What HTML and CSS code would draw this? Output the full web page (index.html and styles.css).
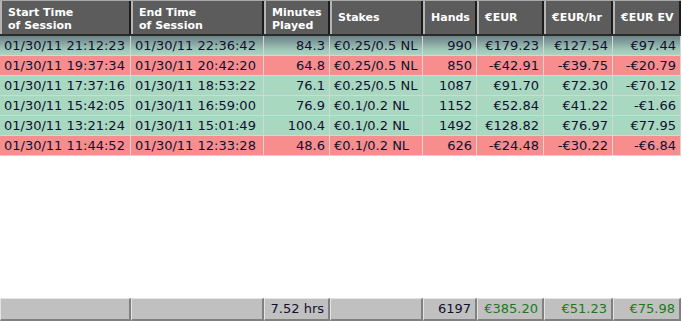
FILE: index.html
```html
<!DOCTYPE html>
<html>
<head>
<meta charset="utf-8">
<link rel="stylesheet" href="styles.css">
</head>
<body>
<div class="grid">
  <div class="row head">
    <div class="h">Start Time<br>of Session</div>
    <div class="h">End Time<br>of Session</div>
    <div class="h">Minutes<br>Played</div>
    <div class="h mid">Stakes</div>
    <div class="h mid">Hands</div>
    <div class="h mid">€EUR</div>
    <div class="h mid">€EUR/hr</div>
    <div class="h mid">€EUR EV</div>
  </div>
  <div class="row sel">
    <div class="c">01/30/11 21:12:23</div><div class="c">01/30/11 22:36:42</div><div class="c r">84.3</div><div class="c">€0.25/0.5 NL</div><div class="c r">990</div><div class="c r">€179.23</div><div class="c r">€127.54</div><div class="c r">€97.44</div>
  </div>
  <div class="row neg">
    <div class="c">01/30/11 19:37:34</div><div class="c">01/30/11 20:42:20</div><div class="c r">64.8</div><div class="c">€0.25/0.5 NL</div><div class="c r">850</div><div class="c r">-€42.91</div><div class="c r">-€39.75</div><div class="c r">-€20.79</div>
  </div>
  <div class="row pos">
    <div class="c">01/30/11 17:37:16</div><div class="c">01/30/11 18:53:22</div><div class="c r">76.1</div><div class="c">€0.25/0.5 NL</div><div class="c r">1087</div><div class="c r">€91.70</div><div class="c r">€72.30</div><div class="c r">-€70.12</div>
  </div>
  <div class="row pos">
    <div class="c">01/30/11 15:42:05</div><div class="c">01/30/11 16:59:00</div><div class="c r">76.9</div><div class="c">€0.1/0.2 NL</div><div class="c r">1152</div><div class="c r">€52.84</div><div class="c r">€41.22</div><div class="c r">-€1.66</div>
  </div>
  <div class="row pos">
    <div class="c">01/30/11 13:21:24</div><div class="c">01/30/11 15:01:49</div><div class="c r">100.4</div><div class="c">€0.1/0.2 NL</div><div class="c r">1492</div><div class="c r">€128.82</div><div class="c r">€76.97</div><div class="c r">€77.95</div>
  </div>
  <div class="row neg">
    <div class="c">01/30/11 11:44:52</div><div class="c">01/30/11 12:33:28</div><div class="c r">48.6</div><div class="c">€0.1/0.2 NL</div><div class="c r">626</div><div class="c r">-€24.48</div><div class="c r">-€30.22</div><div class="c r">-€6.84</div>
  </div>
  <div class="spacer"></div>
  <div class="row foot">
    <div class="f"></div><div class="f"></div><div class="f r">7.52 hrs</div><div class="f"></div><div class="f r">6197</div><div class="f r g">€385.20</div><div class="f r g">€51.23</div><div class="f r g">€75.98</div>
  </div>
</div>
</body>
</html>
```
FILE: styles.css
```css
html, body {
  margin: 0;
  padding: 0;
  background: #ffffff;
}
body {
  font-family: "DejaVu Sans", Verdana, sans-serif;
  font-size: 13px;
  color: #101030;
}
.grid {
  width: 681px;
  height: 321px;
  display: flex;
  flex-direction: column;
}
.row {
  display: grid;
  grid-template-columns: 131px 133px 66px 93px 54px 67px 69px 68px;
}
.head {
  height: 36px;
  background: #a8a8a8;
  padding-top: 1px;
  box-sizing: border-box;
  border-bottom: 2px solid #2a2a2a;
}
.h {
  background: #5c5c5c;
  color: #ffffff;
  font-weight: bold;
  font-size: 11px;
  line-height: 13px;
  padding: 5px 5px 0 6px;
  border-left: 2px solid #b4b4b4;
  border-right: 2px solid #1c1c1c;
  box-sizing: border-box;
}
.h.mid {
  display: flex;
  align-items: center;
  padding-top: 0;
}
.c {
  height: 20px;
  line-height: 19px;
  padding: 0 4px;
  box-sizing: border-box;
  border-right: 1px solid #d6d6d6;
  border-bottom: 1px solid #d6d6d6;
  white-space: nowrap;
}
.r {
  text-align: right;
}
.pos .c {
  background: #a9d8c1;
}
.neg .c {
  background: #f78d8d;
}
.sel .c {
  background: linear-gradient(#6c8189, #9fc5b5 70%, #a9d5c1);
}
.spacer {
  flex: 1;
}
.foot {
  height: 23px;
  background: #c0c0c0;
}
.f {
  background: #c0c0c0;
  border-top: 1px solid #e4e4e4;
  border-left: 1px solid #e4e4e4;
  border-right: 2px solid #808080;
  border-bottom: 2px solid #808080;
  box-sizing: border-box;
  line-height: 20px;
  padding: 0 4px;
  white-space: nowrap;
}
.g {
  color: #1a7a1a;
}
```
